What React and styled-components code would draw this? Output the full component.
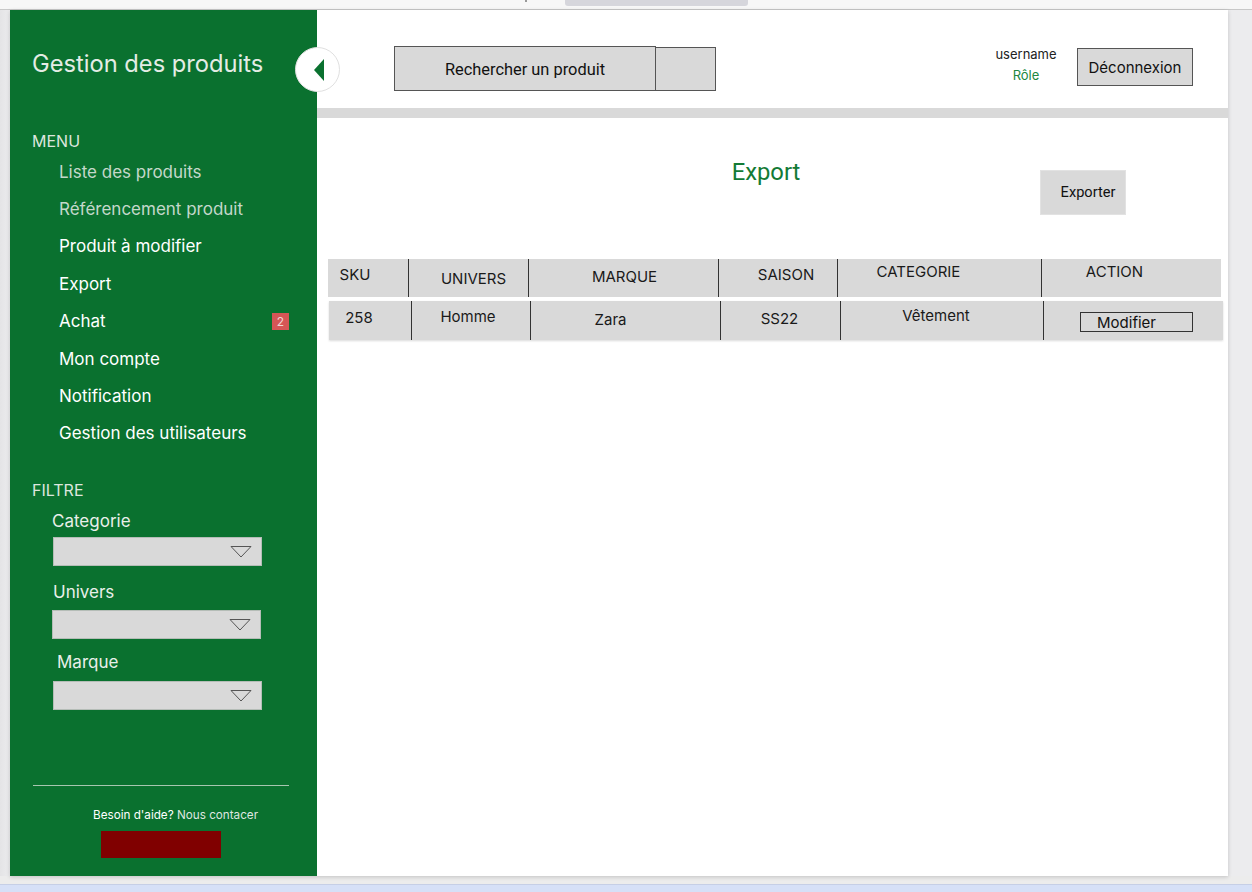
import React from 'react'
import styled, { createGlobalStyle } from 'styled-components'

const GlobalStyle = createGlobalStyle`
    * { box-sizing: border-box; }
    body {
        margin: 0;
        background: #ececec;
        font-family: Inter, "Noto Sans", sans-serif;
    }
`

const Page = styled.div`
    height: 892px;
    display: flex;
    flex-direction: column;
    overflow: hidden;
`

const TopStrip = styled.div`
    height: 10px;
    flex-shrink: 0;
    background: #f7f7f7;
    border-bottom: 1px solid #c8c8c8;
    display: flex;
    align-items: flex-start;
`

const Tick = styled.div`
    width: 2px;
    height: 2px;
    margin-left: 525px;
    background: #999;
`

const Tab = styled.div`
    width: 183px;
    height: 6px;
    margin-left: 38px;
    background: #d6d6dc;
    border-radius: 0 0 3px 3px;
`

const Stage = styled.div`
    flex: 1;
    padding-left: 10px;
    background: linear-gradient(90deg, #e4e4e6 0, #ececee 10px);
`

const Frame = styled.div`
    position: relative;
    width: 1218px;
    height: 866px;
    display: flex;
    background: #fff;
    box-shadow: 0 1px 4px rgba(0, 0, 0, 0.18);
`

const BottomStrip = styled.div`
    height: 8px;
    flex-shrink: 0;
    margin-top: 8px;
    background: #d6e0f7;
    border-top: 1px solid #c6cfe6;
`

/* ---------- sidebar ---------- */

const Sidebar = styled.aside`
    width: 307px;
    flex-shrink: 0;
    background: #0a712f;
    padding: 39px 0 18px 22px;
    display: flex;
    flex-direction: column;
`

const Brand = styled.div`
    font-size: 23.7px;
    line-height: 30px;
    color: #e4ece5;
`

const SectionTitle = styled.div`
    font-size: 16px;
    line-height: 20px;
    color: #dde6de;
    margin-top: ${p => p.$top}px;
`

const MenuList = styled.ul`
    list-style: none;
    margin: 2px 0 0 0;
    padding: 0 0 0 27px;
`

const MenuItem = styled.li`
    height: 37.4px;
    display: flex;
    align-items: center;
    justify-content: space-between;
    padding-right: 28px;
    font-size: 17px;
    color: ${p => (p.$dim ? '#c4d8ca' : '#ffffff')};
`

const Badge = styled.span`
    width: 17px;
    height: 17px;
    display: flex;
    align-items: center;
    justify-content: center;
    background: #d65656;
    color: #f2d6d6;
    font-size: 12px;
`

const FilterLabel = styled.div`
    font-size: 17px;
    line-height: 20px;
    color: #e9efea;
    margin: ${p => p.$top}px 0 0 ${p => p.$left}px;
`

const Select = styled.div`
    width: 209px;
    height: 29px;
    margin: ${p => p.$top}px 0 0 ${p => p.$left}px;
    background: #d9d9d9;
    border: 1px solid #b5bdb7;
    display: flex;
    align-items: center;
    justify-content: flex-end;
    padding-right: 9px;
`

const Footer = styled.div`
    margin-top: auto;
    display: flex;
    flex-direction: column;
`

const Divider = styled.div`
    width: 256px;
    height: 1px;
    margin-left: 1px;
    background: #a8c6b0;
`

const Help = styled.div`
    margin: 21px 0 0 61px;
    font-size: 11.7px;
    line-height: 16px;
    color: #fff;
    span { color: #dfe6e0; }
`

const RedBox = styled.div`
    width: 120px;
    height: 27px;
    margin: 8px 0 0 69px;
    background: #800000;
`

const Toggle = styled.button`
    position: absolute;
    left: 285px;
    top: 37px;
    width: 45px;
    height: 45px;
    border-radius: 50%;
    background: #fff;
    border: 1px solid #e0e0e0;
    padding: 0 0 0 2px;
    display: flex;
    align-items: center;
    justify-content: center;
`

/* ---------- main ---------- */

const Main = styled.main`
    flex: 1;
    display: flex;
    flex-direction: column;
`

const Header = styled.header`
    height: 98px;
    display: flex;
    align-items: flex-start;
    padding: 36px 35px 0 77px;
`

const SearchBox = styled.div`
    width: 262px;
    height: 45px;
    padding-top: 2px;
    background: #d9d9d9;
    border: 1px solid #555;
    display: flex;
    align-items: center;
    justify-content: center;
    font-family: Roboto, sans-serif;
    font-size: 16.4px;
    color: #111;
`

const SearchButton = styled.div`
    width: 60px;
    height: 44px;
    margin-top: 1px;
    background: #d9d9d9;
    border: 1px solid #555;
    border-left: none;
`

const User = styled.div`
    margin: -2px 0 0 auto;
    width: 80px;
    display: flex;
    flex-direction: column;
    align-items: center;
    font-size: 13px;
    line-height: 21px;
    color: #222;
    span { color: #21873f; }
`

const LogoutButton = styled.button`
    margin: 2px 0 0 11px;
    width: 116px;
    height: 38px;
    background: #d9d9d9;
    border: 1px solid #555;
    font-family: Inter, sans-serif;
    font-size: 15px;
    color: #111;
    padding: 0;
`

const GrayBar = styled.div`
    height: 10px;
    background: #d9d9d9;
`

const Toolbar = styled.div`
    display: flex;
    align-items: flex-start;
    padding-right: 102px;
`

const Title = styled.h1`
    width: 200px;
    margin: 40px 0 0 349px;
    text-align: center;
    font-family: Roboto, sans-serif;
    font-weight: 400;
    font-size: 23.8px;
    line-height: 28px;
    color: #137a35;
`

const ExportButton = styled.button`
    margin: 52px 0 0 auto;
    width: 86px;
    height: 45px;
    background: #d9d9d9;
    border: 1px solid #e2e2e2;
    font-family: Roboto, sans-serif;
    font-size: 14.6px;
    color: #111;
    padding: 0 0 2px 10px;
`

const Table = styled.div`
    margin: 44px 0 0 11px;
    display: flex;
    flex-direction: column;
    align-items: flex-start;
    gap: 4px;
`

const Row = styled.div`
    display: grid;
    grid-template-columns: ${p => p.$cols};
    height: ${p => p.$h}px;
    margin-left: ${p => p.$shift}px;
    background: #d9d9d9;
    box-shadow: ${p => (p.$shadow ? '0 1px 2px rgba(0,0,0,0.15)' : 'none')};
`

const Cell = styled.div`
    text-align: center;
    font-size: 15px;
    line-height: 18px;
    color: #1a1a1a;
    padding-top: ${p => p.$dy}px;
    padding-left: ${p => (p.$dx > 0 ? p.$dx * 2 : 0)}px;
    padding-right: ${p => (p.$dx < 0 ? -p.$dx * 2 : 0)}px;
    & + & { border-left: 1px solid #333; }
    display: flex;
    justify-content: center;
    align-items: flex-start;
`

const EditButton = styled.button`
    width: 113px;
    height: 20px;
    background: #d9d9d9;
    border: 1px solid #333;
    font-family: Inter, sans-serif;
    font-size: 15px;
    line-height: 18px;
    color: #111;
    padding: 1px 20px 0 0;
`

const Chevron = () => (
    <svg width="22" height="13" viewBox="0 0 22 13">
        <path d="M1 1.5 L21 1.5 L11 12 Z" fill="none" stroke="#555" strokeWidth="1" />
    </svg>
)

const menu = [
    { label: 'Liste des produits', dim: true },
    { label: 'Référencement produit', dim: true },
    { label: 'Produit à modifier' },
    { label: 'Export' },
    { label: 'Achat', badge: 2 },
    { label: 'Mon compte' },
    { label: 'Notification' },
    { label: 'Gestion des utilisateurs' },
]

const filters = [
    { label: 'Categorie', lt: 11, ll: 20, st: 6, sl: 21 },
    { label: 'Univers', lt: 16, ll: 21, st: 8, sl: 20 },
    { label: 'Marque', lt: 13, ll: 25, st: 9, sl: 21 },
]

const headCols = '80px 120px 190px 119px 204px 180px'
const rowCols = '82px 119px 190px 120px 203px 180px'

const head = [
    { t: 'SKU', dx: -13, dy: 7 },
    { t: 'UNIVERS', dx: 5, dy: 11 },
    { t: 'MARQUE', dx: 1, dy: 9 },
    { t: 'SAISON', dx: 8, dy: 7 },
    { t: 'CATEGORIE', dx: -21, dy: 4 },
    { t: 'ACTION', dx: -17, dy: 4 },
]

const row = [
    { t: '258', dx: -11, dy: 8 },
    { t: 'Homme', dx: -3, dy: 7 },
    { t: 'Zara', dx: -15, dy: 10 },
    { t: 'SS22', dx: -1, dy: 9 },
    { t: 'Vêtement', dx: -6, dy: 6 },
]

const App = () => {
    return (
        <Page>
            <GlobalStyle />
            <TopStrip>
                <Tick />
                <Tab />
            </TopStrip>
            <Stage>
                <Frame>
                    <Sidebar>
                        <Brand>Gestion des produits</Brand>
                        <SectionTitle $top={52}>MENU</SectionTitle>
                        <MenuList>
                            {menu.map(m => (
                                <MenuItem key={m.label} $dim={m.dim}>
                                    {m.label}
                                    {m.badge && <Badge>{m.badge}</Badge>}
                                </MenuItem>
                            ))}
                        </MenuList>
                        <SectionTitle $top={28}>FILTRE</SectionTitle>
                        {filters.map(f => (
                            <React.Fragment key={f.label}>
                                <FilterLabel $top={f.lt} $left={f.ll}>{f.label}</FilterLabel>
                                <Select $top={f.st} $left={f.sl}>
                                    <Chevron />
                                </Select>
                            </React.Fragment>
                        ))}
                        <Footer>
                            <Divider />
                            <Help>Besoin d'aide? <span>Nous contacer</span></Help>
                            <RedBox />
                        </Footer>
                    </Sidebar>
                    <Toggle aria-label="Réduire le menu">
                        <svg width="10" height="22" viewBox="0 0 10 22">
                            <path d="M10 0 L0 11 L10 22 Z" fill="#0a712f" />
                        </svg>
                    </Toggle>
                    <Main>
                        <Header>
                            <SearchBox>Rechercher un produit</SearchBox>
                            <SearchButton />
                            <User>
                                username
                                <span>Rôle</span>
                            </User>
                            <LogoutButton>Déconnexion</LogoutButton>
                        </Header>
                        <GrayBar />
                        <Toolbar>
                            <Title>Export</Title>
                            <ExportButton>Exporter</ExportButton>
                        </Toolbar>
                        <Table>
                            <Row $cols={headCols} $h={38} $shift={0}>
                                {head.map(c => (
                                    <Cell key={c.t} $dx={c.dx} $dy={c.dy}>{c.t}</Cell>
                                ))}
                            </Row>
                            <Row $cols={rowCols} $h={39} $shift={1} $shadow>
                                {row.map(c => (
                                    <Cell key={c.t} $dx={c.dx} $dy={c.dy}>{c.t}</Cell>
                                ))}
                                <Cell $dx={3} $dy={11}>
                                    <EditButton>Modifier</EditButton>
                                </Cell>
                            </Row>
                        </Table>
                    </Main>
                </Frame>
            </Stage>
            <BottomStrip />
        </Page>
    )
}

export default App
